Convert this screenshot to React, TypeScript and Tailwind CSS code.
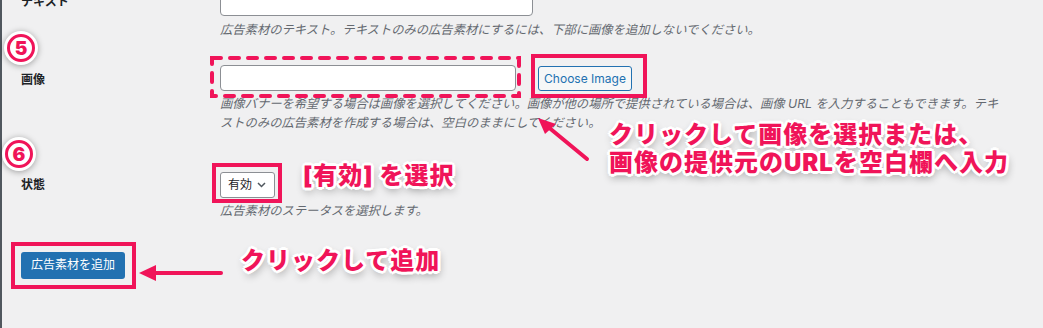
import React from 'react';

const PINK = '#f01459';

const outline =
  "[text-shadow:2px_0_0_#fff,-2px_0_0_#fff,0_2px_0_#fff,0_-2px_0_#fff,2px_2px_0_#fff,-2px_-2px_0_#fff,2px_-2px_0_#fff,-2px_2px_0_#fff,3px_0_0_#fff,-3px_0_0_#fff,0_3px_0_#fff,0_-3px_0_#fff,1px_4px_8px_rgba(0,0,0,0.45)]";

const Num: React.FC<{ n: string; className: string }> = ({ n, className }) => (
  <div className={`absolute w-[34px] h-[34px] rounded-full bg-white shadow-[0_1px_6px_rgba(0,0,0,0.35)] flex items-center justify-center ${className}`}>
    <div className="w-[28px] h-[28px] rounded-full border-[3px] border-[#f01459] flex items-center justify-center text-[#f01459] text-[19px] font-black leading-none">
      {n}
    </div>
  </div>
);

const Note: React.FC<{ className: string; children: React.ReactNode }> = ({ className, children }) => (
  <div className={`absolute text-[24px] tracking-[1px] leading-[28px] font-black text-[#f01459] whitespace-nowrap ${outline} ${className}`}>
    {children}
  </div>
);

export default function App() {
  return (
    <div className="relative w-[1043px] h-[328px] overflow-hidden bg-[#f0f0f1] shadow-[inset_2px_0_0_#50575e] font-['Inter','Noto_Sans_CJK_JP',sans-serif] text-[#1d2327]">
      <div className="flex flex-col pl-[21px] mt-[-30px]">
        {/* テキスト */}
        <div className="flex">
          <div className="w-[199px] pt-[23px] text-[12px] leading-[18px] font-bold">テキスト</div>
          <div>
            <div className="w-[313px] h-[46px] bg-white border border-[#8c8f94] rounded-[4px]" />
            <p className="mt-[4px] text-[12.3px] leading-[19px] italic text-[#646970]">
              広告素材のテキスト。テキストのみの広告素材にするには、下部に画像を追加しないでください。
            </p>
          </div>
        </div>

        {/* 画像 */}
        <div className="flex">
          <div className="w-[199px] pt-[32px] text-[12px] leading-[18px] font-bold">画像</div>
          <div className="pt-[26px]">
            <div className="flex items-start">
              <input className="w-[296px] h-[26px] bg-white border border-[#8c8f94] rounded-[4px] outline-none" />
              <button className="ml-[22px] mt-[1px] w-[94px] h-[25px] bg-[#f6f7f7] border border-[#2271b1] rounded-[3px] text-[12px] text-[#2271b1]">
                Choose Image
              </button>
            </div>
            <p className="mt-[3px] text-[12.3px] leading-[19px] italic text-[#646970] whitespace-nowrap">
              画像バナーを希望する場合は画像を選択してください。画像が他の場所で提供されている場合は、画像 URL を入力することもできます。テキ
              <br />
              ストのみの広告素材を作成する場合は、空白のままにしてください。
            </p>
          </div>
        </div>

        {/* 状態 */}
        <div className="flex">
          <div className="w-[199px] pt-[44px] text-[12px] leading-[18px] font-bold">状態</div>
          <div className="pt-[40px]">
            <div className="w-[55px] h-[26px] bg-white border border-[#8c8f94] rounded-[3px] flex items-center pl-[7px] gap-[5px] text-[12px]">
              <span>有効</span>
              <svg width="9" height="6" viewBox="0 0 9 6">
                <path d="M1 1l3.5 3.5L8 1" fill="none" stroke="#50575e" strokeWidth="1.5" />
              </svg>
            </div>
            <p className="mt-[3px] text-[12.3px] leading-[19px] italic text-[#646970]">広告素材のステータスを選択します。</p>
          </div>
        </div>

        <div className="pt-[31px]">
          <button className="h-[27px] px-[10px] bg-[#2271b1] text-white text-[12px] rounded-[3px]">広告素材を追加</button>
        </div>
      </div>

      {/* annotations */}
      <Num n="5" className="left-[4px] top-[31px]" />
      <Num n="6" className="left-[2px] top-[137px]" />

      <svg className="absolute left-[210px] top-[56px]" width="311" height="42">
        <rect x="2" y="2" width="307" height="38" fill="none" stroke={PINK} strokeWidth="4" strokeDasharray="9 9" strokeLinecap="round" />
      </svg>
      <div className="absolute left-[531px] top-[54px] w-[116px] h-[44px] border-4 border-[#f01459]" />
      <div className="absolute left-[212px] top-[163px] w-[70px] h-[40px] border-4 border-[#f01459]" />
      <div className="absolute left-[11px] top-[242px] w-[125px] h-[47px] border-4 border-[#f01459]" />

      <svg className="absolute left-0 top-0" width="1043" height="328">
        <line x1="587" y1="159" x2="547" y2="126" stroke={PINK} strokeWidth="4" strokeLinecap="round" />
        <polygon points="538,118 556,124 545,134" fill={PINK} />
        <line x1="221" y1="273" x2="152" y2="273" stroke={PINK} strokeWidth="4" strokeLinecap="round" />
        <polygon points="139,273 156,265 156,281" fill={PINK} />
      </svg>

      <Note className="left-[609px] top-[121px]">
        クリックして画像を選択または、
        <br />
        画像の提供元のURLを空白欄へ入力
      </Note>
      <Note className="left-[303px] top-[162px]">[有効] を選択</Note>
      <Note className="left-[241px] top-[247px]">クリックして追加</Note>
    </div>
  );
}
